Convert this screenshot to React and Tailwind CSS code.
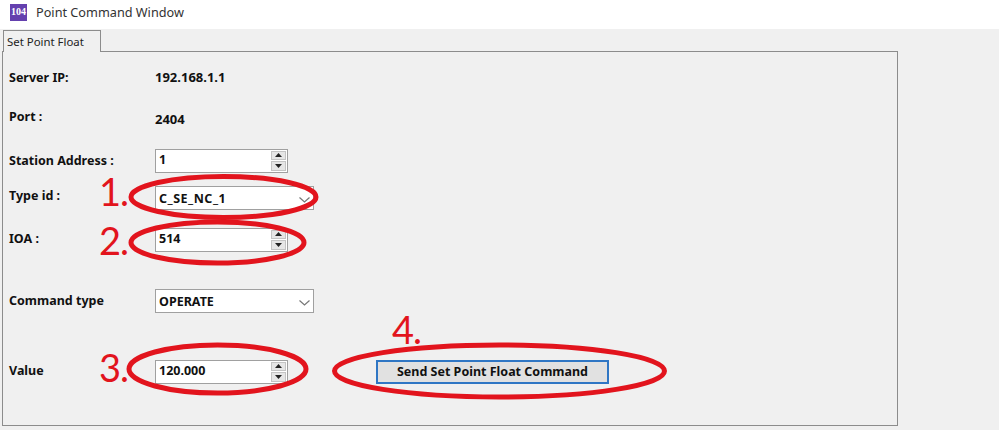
const labelCls = "w-[146px] shrink-0 text-[12.5px] font-bold text-[#111]";
const boxCls = "flex items-center bg-white border border-[#a0a0a0] h-[24px] text-[12.5px] font-bold text-[#111] pl-[3px]";

function Spinner({ value }) {
  return (
    <div className={`${boxCls} w-[133px] pb-px`}>
      <span className="flex-1">{value}</span>
      <div className="flex flex-col gap-px mr-[1px] w-[15px] h-[20px]">
        <div className="flex-1 flex items-center justify-center bg-[#e6e6e6] border border-[#c4c4c4]">
          <svg width="7" height="4" viewBox="0 0 7 4"><path d="M3.5 0L7 4H0z" fill="#222" /></svg>
        </div>
        <div className="flex-1 flex items-center justify-center bg-[#e6e6e6] border border-[#c4c4c4]">
          <svg width="7" height="4" viewBox="0 0 7 4"><path d="M0 0H7L3.5 4z" fill="#222" /></svg>
        </div>
      </div>
    </div>
  );
}

function Combo({ value, className }) {
  return (
    <div className={`${boxCls} w-[159px] pt-[3px]`}>
      <span className={`flex-1 ${className}`}>{value}</span>
      <svg width="11" height="6" viewBox="0 0 11 6" className="mr-[3px]">
        <path d="M0.5 0.5L5.5 5L10.5 0.5" fill="none" stroke="#777" strokeWidth="1.2" />
      </svg>
    </div>
  );
}

function Row({ label, className, labelClass = "", children }) {
  return (
    <div className={`flex items-center ${className}`}>
      <span className={`${labelCls} ${labelClass}`}>{label}</span>
      {children}
    </div>
  );
}

function Marks() {
  const rings = [
    [223.5, 197, 92.5, 20.5],
    [217.5, 242.5, 86.5, 20.5],
    [217.5, 369, 88.5, 24],
    [499.5, 371, 165, 26],
  ];
  return (
    <svg width="999" height="430" className="absolute inset-0 pointer-events-none">
      {rings.map(([cx, cy, rx, ry], i) => (
        <ellipse key={i} cx={cx} cy={cy} rx={rx} ry={ry} fill="none" stroke="#e2141d" strokeWidth="5" />
      ))}
    </svg>
  );
}

function Num({ className, children }) {
  return (
    <span className={`absolute font-['Lato',sans-serif] text-[38px] leading-none tracking-[-1px] text-[#e2141d] ${className}`}>
      {children}
    </span>
  );
}

export default function App() {
  return (
    <div className="relative w-[999px] h-[430px] overflow-hidden bg-[#f0f0f0] font-['Noto_Sans',sans-serif]">
      {/* title bar */}
      <div className="h-[29px] bg-white flex items-center pl-[10px]">
        <div className="w-[17px] h-[17px] bg-[#6440ae] flex items-center justify-center mb-[5px]">
          <span className="font-['Liberation_Serif',serif] text-[10px] font-bold text-white leading-none">104</span>
        </div>
        <span className="ml-[9px] mb-[3px] text-[12.7px] text-[#333]">Point Command Window</span>
      </div>

      {/* tab */}
      <div className="ml-[3px] mt-px w-[98px] h-[22px] relative z-10 -mb-px bg-[#f0f0f0] border border-b-0 border-[#8c8c8c] flex items-center pl-[3px] text-[11.4px] text-[#222]">
        Set Point Float
      </div>

      {/* panel */}
      <div className="ml-[2px] w-[896px] h-[375px] border border-[#8c8c8c] pl-[6px]">
        <Row label="Server IP:" className="h-[20px] mt-[16px]">
          <span className="text-[13px] font-bold text-[#111]">192.168.1.1</span>
        </Row>
        <Row label="Port :" className="h-[20px] mt-[19px]">
          <span className="text-[13px] font-bold text-[#111] mt-[6px]">2404</span>
        </Row>
        <Row label="Station Address :" className="h-[24px] mt-[22px]">
          <Spinner value="1" />
        </Row>
        <Row label="Type id :" labelClass="mb-[3px]" className="h-[24px] mt-[13px]">
          <Combo value="C_SE_NC_1" className="tracking-[0.5px]" />
        </Row>
        <Row label="IOA :" labelClass="mb-[1px]" className="h-[24px] mt-[18px]">
          <Spinner value="514" />
        </Row>
        <Row label="Command type" className="h-[24px] mt-[37px]">
          <Combo value="OPERATE" />
        </Row>
        <Row label="Value" labelClass="mb-[2px]" className="h-[24px] mt-[47px]">
          <Spinner value="120.000" />
          <button className="ml-[88px] w-[233px] h-[24px] bg-[#e1e1e1] border-2 border-[#2f76c4] text-[12.5px] font-bold text-[#111]">
            Send Set Point Float Command
          </button>
        </Row>
      </div>

      <Marks />
      <Num className="left-[99px] top-[172px]">1.</Num>
      <Num className="left-[99px] top-[221px]">2.</Num>
      <Num className="left-[99px] top-[348px]">3.</Num>
      <Num className="left-[392px] top-[310px]">4.</Num>
    </div>
  );
}
